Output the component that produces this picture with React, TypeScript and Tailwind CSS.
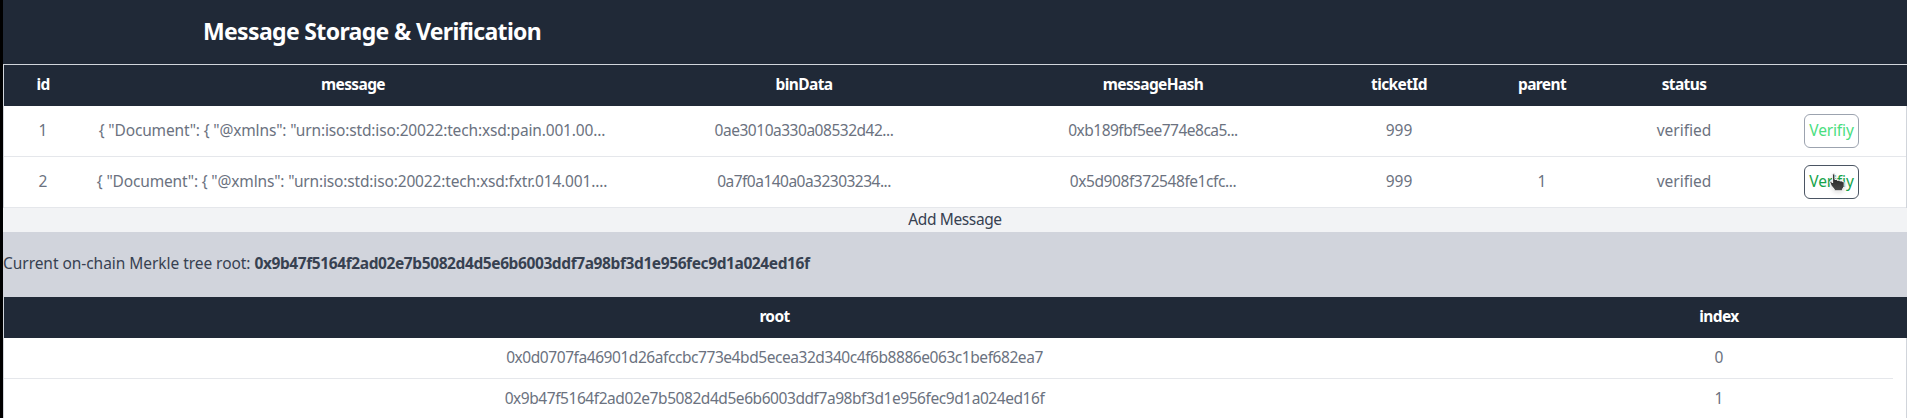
import React from 'react';

type Message = {
  id: number;
  message: string;
  binData: string;
  hash: string;
  ticketId: number;
  parent: string;
  status: string;
  active: boolean;
};

const messages: Message[] = [
  {
    id: 1,
    message: '{ "Document": { "@xmlns": "urn:iso:std:iso:20022:tech:xsd:pain.001.00...',
    binData: '0ae3010a330a08532d42...',
    hash: '0xb189fbf5ee774e8ca5...',
    ticketId: 999,
    parent: '',
    status: 'verified',
    active: false,
  },
  {
    id: 2,
    message: '{ "Document": { "@xmlns": "urn:iso:std:iso:20022:tech:xsd:fxtr.014.001....',
    binData: '0a7f0a140a0a32303234...',
    hash: '0x5d908f372548fe1cfc...',
    ticketId: 999,
    parent: '1',
    status: 'verified',
    active: true,
  },
];

const roots = [
  '0x0d0707fa46901d26afccbc773e4bd5ecea32d340c4f6b8886e063c1bef682ea7',
  '0x9b47f5164f2ad02e7b5082d4d5e6b6003ddf7a98bf3d1e956fec9d1a024ed16f',
];

const messageCols =
  'grid grid-cols-[78px_542px_360px_338px_154px_132px_152px_143px] items-center text-center';
const rootCols = 'grid grid-cols-[1541px_348px] items-center text-center';
const headRow = '-mr-px h-[41px] bg-[#202937] pb-[3px] font-bold tracking-[-0.62px] text-white';

function HandCursor() {
  return (
    <svg
      className="absolute left-[24px] top-[7px] drop-shadow-sm"
      width="16"
      height="20"
      viewBox="0 0 16 20"
    >
      <defs>
        <linearGradient id="hand" x1="0" y1="0" x2="0" y2="1">
          <stop offset="0" stopColor="#1c1c1c" />
          <stop offset="1" stopColor="#4a4a4a" />
        </linearGradient>
      </defs>
      <path
        d="M3.600 1.900c0-1.500 2.300-1.500 2.300 0v4.600h1.600l.5.700h2.200l.5.700h2.100l.5.700h1c.6 0 .9.500.9 1.200v3.700l-1.700 2.700v1.600H5.300v-1.500L2.300 12.800 1 9.800c-.4-1.500.9-1.900 1.700-.9l.9 1.100z"
        fill="url(#hand)"
        stroke="#f4f4f4"
        strokeWidth="1"
        strokeLinejoin="round"
      />
    </svg>
  );
}

export default function App() {
  return (
    <div className="h-[418px] overflow-hidden bg-black pl-[3px] font-['Noto_Sans',sans-serif] text-[15.5px] leading-6 text-[#374151]">
      <header className="flex h-16 items-center bg-[#202937] pb-[3px] pl-[200px]">
        <h1 className="whitespace-nowrap text-[23px] font-bold tracking-[-0.65px] text-white">
          Message Storage &amp; Verification
        </h1>
      </header>

      <section className="border border-b-0 border-[#d1d5db] bg-white text-[#6b7280]">
        <div className={`${messageCols} ${headRow}`}>
          <span>id</span>
          <span>message</span>
          <span>binData</span>
          <span>messageHash</span>
          <span>ticketId</span>
          <span>parent</span>
          <span>status</span>
        </div>
        {messages.map((m) => (
          <div key={m.id} className={`${messageCols} h-[51px] whitespace-nowrap border-b border-gray-200`}>
            <span className="pb-0.5">{m.id}</span>
            <span className="pb-0.5 pr-[2px] tracking-[-0.16px]">{m.message}</span>
            <span className={m.active ? 'pb-0.5 tracking-[-0.52px]' : 'pb-0.5 tracking-[-0.48px]'}>
              {m.binData}
            </span>
            <span className={m.active ? 'pb-0.5 tracking-[-0.43px]' : 'pb-0.5 tracking-[-0.52px]'}>
              {m.hash}
            </span>
            <span className="pb-0.5">{m.ticketId}</span>
            <span className="pb-0.5">{m.parent}</span>
            <span className="pb-0.5">{m.status}</span>
            <span className="flex justify-center">
              <button
                className={
                  m.active
                    ? 'relative flex h-[34px] w-[55px] items-center justify-center rounded-md border border-[#4b5563] pb-0.5 tracking-[-0.15px] text-[#16a34a]'
                    : 'relative flex h-[34px] w-[55px] items-center justify-center rounded-md border border-[#9ca3af] pb-0.5 tracking-[-0.15px] text-[#4ade80]'
                }
              >
                Verifiy
                {m.active && <HandCursor />}
              </button>
            </span>
          </div>
        ))}
      </section>

      <button className="flex h-6 w-full items-center justify-center bg-[#f2f3f5] pb-0.5 tracking-[-0.38px]">
        Add Message
      </button>

      <div className="flex h-[65px] items-center whitespace-pre bg-[#d1d4dc] pb-[3px]">
        <span className="tracking-[-0.05px]">Current on-chain Merkle tree root: </span>
        <span className="font-bold tracking-[-0.4px]">{roots[1]}</span>
      </div>

      <section className="h-[121px] border-x border-[#d1d5db] bg-white text-[#6b7280]">
        <div className={`${rootCols} ${headRow}`}>
          <span>root</span>
          <span>index</span>
        </div>
        {roots.map((root) => (
          <div
            key={root}
            className={`${rootCols} mr-[13px] h-[41px] border-b border-gray-200 pb-[2px]`}
          >
            <span className="tracking-[-0.44px]">{root}</span>
            <span>{roots.indexOf(root)}</span>
          </div>
        ))}
      </section>
    </div>
  );
}
